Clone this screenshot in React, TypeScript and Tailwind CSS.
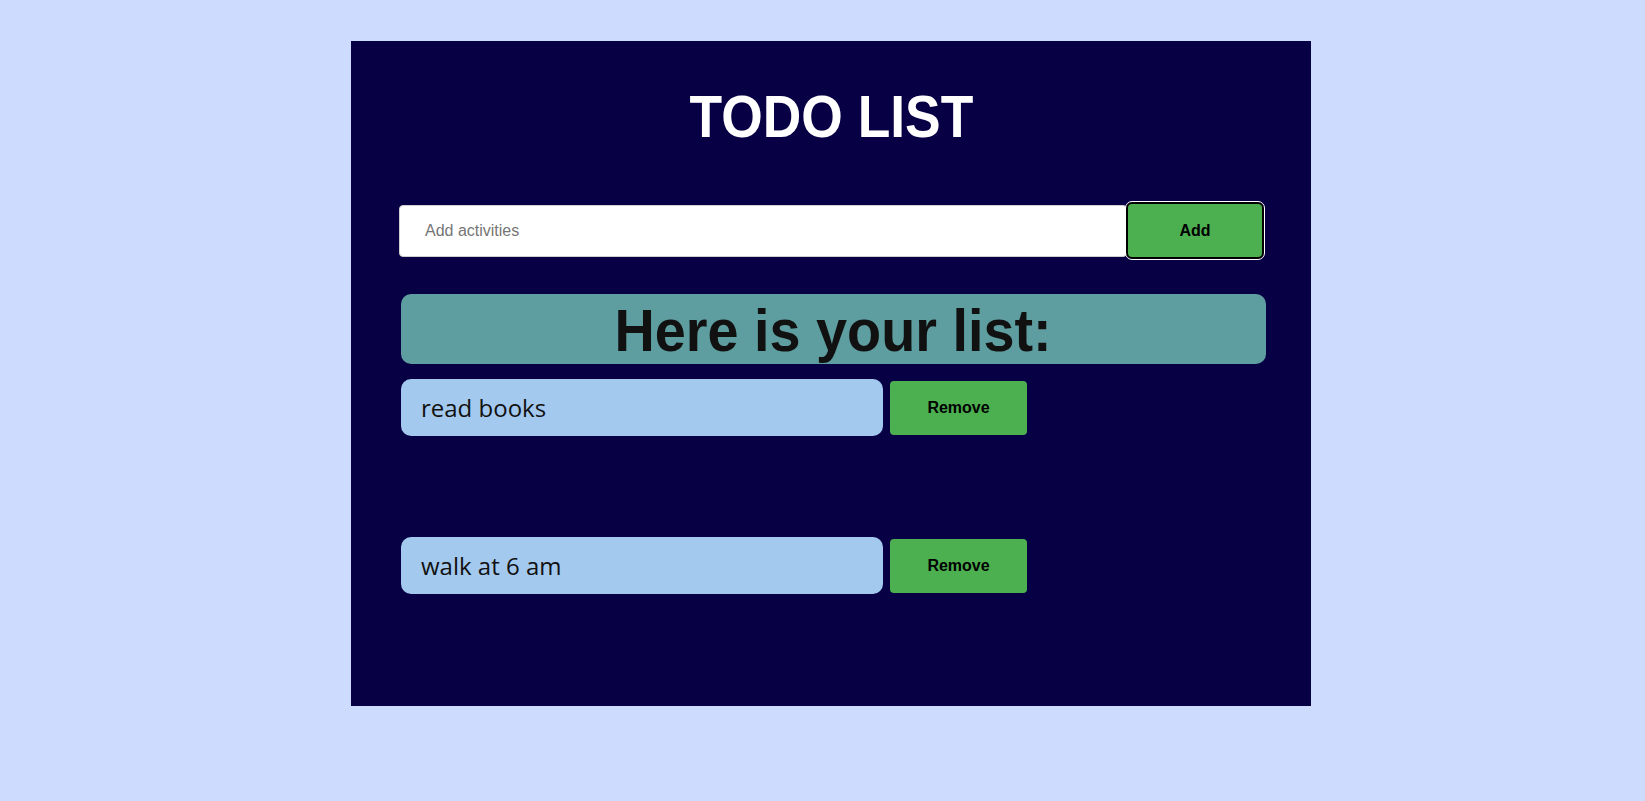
import { useState } from 'react';

export default function App() {
  const [items, setItems] = useState<string[]>(['read books', 'walk at 6 am']);
  const [text, setText] = useState('');

  const addItem = () => {
    if (!text.trim()) return;
    setItems([...items, text]);
    setText('');
  };

  return (
    <div className="min-h-[801px] w-full bg-[#cddcfe] pt-[41px] pl-[351px]">
      <div className="w-[960px] h-[665px] bg-[#070045] pt-[46px]">
        <h1 className="text-center text-white text-[60px] leading-none font-bold font-['Liberation_Sans',Arial,sans-serif]">
          <span className="inline-block scale-x-[0.89]">TODO LIST</span>
        </h1>

        <div className="mt-[55px] ml-[48px] mr-[47px] flex items-center">
          <input
            value={text}
            onChange={e => setText(e.target.value)}
            placeholder="Add activities"
            className="h-[52px] flex-1 rounded-[4px] border border-[#cfcfcf] bg-white pl-[25px] text-[16px] text-black placeholder:text-[#757575] outline-none font-['Liberation_Sans',Arial,sans-serif]"
          />
          <button
            onClick={addItem}
            className="h-[57px] w-[138px] -ml-[1px] rounded-[6px] border-2 border-black bg-[#4caf50] text-[16px] font-bold text-black outline outline-1 outline-white font-['Liberation_Sans',Arial,sans-serif]"
          >
            Add
          </button>
        </div>

        <div className="mt-[35px] ml-[50px] mr-[45px] h-[70px] rounded-[10px] bg-[#5f9ea0] pt-[4px]">
          <h2 className="text-center text-[#111111] text-[60px] leading-[66px] font-bold font-['Liberation_Sans',Arial,sans-serif]">
            <span className="inline-block scale-x-[0.93]">Here is your list:</span>
          </h2>
        </div>

        <ul className="mt-[15px] ml-[50px] flex flex-col gap-[101px]">
          {items.map((item, i) => (
            <li key={i} className="flex items-center gap-[7px]">
              <div className="h-[57px] w-[482px] rounded-[10px] bg-[#a4c9ee] pl-[20px] flex items-center text-[24px] text-[#111111] font-['Open_Sans',sans-serif]">
                {item}
              </div>
              <button
                onClick={() => setItems(items.filter((_, j) => j !== i))}
                className="h-[54px] w-[137px] rounded-[4px] bg-[#4caf50] text-[16px] font-bold text-black font-['Liberation_Sans',Arial,sans-serif]"
              >
                Remove
              </button>
            </li>
          ))}
        </ul>
      </div>
    </div>
  );
}
